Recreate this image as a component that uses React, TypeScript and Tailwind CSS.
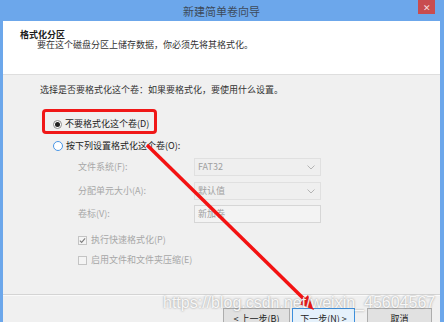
const Radio = ({ checked }: { checked?: boolean }) =>
  checked ? (
    <span className="flex h-[9px] w-[9px] items-center justify-center rounded-full border border-[#8a8a8a] bg-white">
      <span className="h-[5px] w-[5px] rounded-full bg-[#222]" />
    </span>
  ) : (
    <span className="h-[10px] w-[10px] rounded-full border border-[#4a96e6] bg-white" />
  );

const Check = ({ checked }: { checked?: boolean }) => (
  <span className="flex h-[9px] w-[9px] items-center justify-center border border-[#c4c4c4] bg-[#f4f4f4]">
    {checked && (
      <svg width="8" height="7" viewBox="0 0 8 7">
        <path d="M1 3.6 3 5.6 7 1" fill="none" stroke="#7d7d7d" strokeWidth="1.3" />
      </svg>
    )}
  </span>
);

const Chevron = () => (
  <svg width="8" height="5" viewBox="0 0 8 5">
    <path d="M0.5 0.5 4 4 7.5 0.5" fill="none" stroke="#b4b4b4" strokeWidth="1" />
  </svg>
);

const FieldRow = ({ label, value, select, className }: { label: string; value: string; select?: boolean; className: string }) => (
  <div className={`flex items-center ${className}`}>
    <span className="w-[116px] text-[9px] leading-[12px] text-[#a7a7a7]">{label}</span>
    <div
      className={`flex h-[18px] w-[127px] items-center justify-between border pl-[3px] pr-[5px] text-[9px] text-[#a0a0a0] ${
        select ? 'border-[#e0e0e0] bg-[#efefef]' : 'border-[#d6d6d6] bg-[#f3f3f3]'
      }`}
    >
      <span>{value}</span>
      {select && <Chevron />}
    </div>
  </div>
);

export default function App() {
  return (
    <div className="relative flex h-[322px] w-[444px] flex-col overflow-hidden bg-white font-['Microsoft_YaHei','Noto_Sans_CJK_SC',sans-serif]">
      <div className="h-[3px] bg-[#f6f9fd]" />
      <div className="flex flex-1 flex-col bg-[#6ca7eb] pl-[3px] pr-[4px]">
        {/* title bar */}
        <div className="grid h-[21px] grid-cols-[1fr_auto_1fr]">
          <span />
          <span className="self-center text-[11px] leading-[14px] text-[#3d4a5a]">新建简单卷向导</span>
          <span className="flex h-[14px] w-[17px] items-center justify-center self-start justify-self-end mr-[5px] bg-[#c84c4f] text-[9px] leading-none text-[#f6dede]">
            ✕
          </span>
        </div>

        <div className="flex flex-1 flex-col bg-[#f0f0f0]">
          {/* header */}
          <div className="h-[54px] border-b border-[#dedede] bg-white pl-[17px] pt-[8px]">
            <p className="text-[9px] font-bold leading-[11px] text-[#1c1c1c]">格式化分区</p>
            <p className="pl-[17px] text-[9px] leading-[10px] text-[#333]">要在这个磁盘分区上储存数据，你必须先将其格式化。</p>
          </div>

          {/* body */}
          <div className="flex flex-col pl-[37px] pt-[9px]">
            <p className="h-[12px] text-[9px] leading-[12px] text-[#333]">选择是否要格式化这个卷：如果要格式化，要使用什么设置。</p>

            <div className="ml-[2px] mt-[13px] flex h-[25px] w-[115px] items-center gap-[3px] rounded-[4px] border-[3px] border-[#f01818] pl-[8px] pt-[5px]">
              <Radio checked />
              <span className="text-[9px] leading-[12px] text-[#222]">不要格式化这个卷(D)</span>
            </div>

            <div className="ml-[13px] mt-[5px] flex h-[14px] items-center gap-[3px]">
              <Radio />
              <span className="text-[9px] leading-[12px] text-[#222]">按下列设置格式化这个卷(O):</span>
            </div>

            <div className="ml-[38px] flex flex-col">
              <FieldRow className="mt-[5px]" label="文件系统(F):" value="FAT32" select />
              <FieldRow className="mt-[6px]" label="分配单元大小(A):" value="默认值" select />
              <FieldRow className="mt-[5px]" label="卷标(V):" value="新加卷" />

              <div className="mt-[10px] flex h-[14px] items-center gap-[4px]">
                <Check checked />
                <span className="text-[9px] leading-[12px] text-[#a7a7a7]">执行快速格式化(P)</span>
              </div>
              <div className="mt-[6px] flex h-[14px] items-center gap-[4px]">
                <Check />
                <span className="text-[9px] leading-[12px] text-[#a7a7a7]">启用文件和文件夹压缩(E)</span>
              </div>
            </div>
          </div>

          {/* footer */}
          <div className="mt-[27px] h-[2px] border-t border-b border-t-[#d4d4d4] border-b-[#fafafa]" />
          <div className="flex justify-end pr-[8px] pt-[12px]">
            <button className="h-[22px] w-[67px] shrink-0 border border-[#adadad] bg-[#e1e1e1] text-[9px] text-[#222]">&lt; 上一步(B)</button>
            <button className="ml-[2px] h-[22px] w-[63px] shrink-0 border border-[#3d8fdc] bg-[#e5f1fb] text-[9px] text-[#222]">下一步(N) &gt;</button>
            <button className="ml-[12px] h-[22px] w-[65px] shrink-0 border border-[#adadad] bg-[#e1e1e1] text-[9px] text-[#222]">取消</button>
          </div>
        </div>
      </div>

      {/* annotation overlay */}
      <svg className="pointer-events-none absolute left-0 top-0" width="444" height="322" viewBox="0 0 444 322">
        <line x1="147" y1="145" x2="306" y2="301" stroke="#f31212" strokeWidth="3.5" />
        <polygon points="314,310 299,304 308,295" fill="#f31212" />
      </svg>
      <span className="pointer-events-none absolute left-[163px] top-[294px] whitespace-nowrap font-['Liberation_Sans',Arial,sans-serif] text-[16px] leading-[18px] text-white/90 [text-shadow:0_0_2px_rgba(90,90,90,0.7)]">
        https://blog.csdn.net/weixin_45604567
      </span>
    </div>
  );
}
